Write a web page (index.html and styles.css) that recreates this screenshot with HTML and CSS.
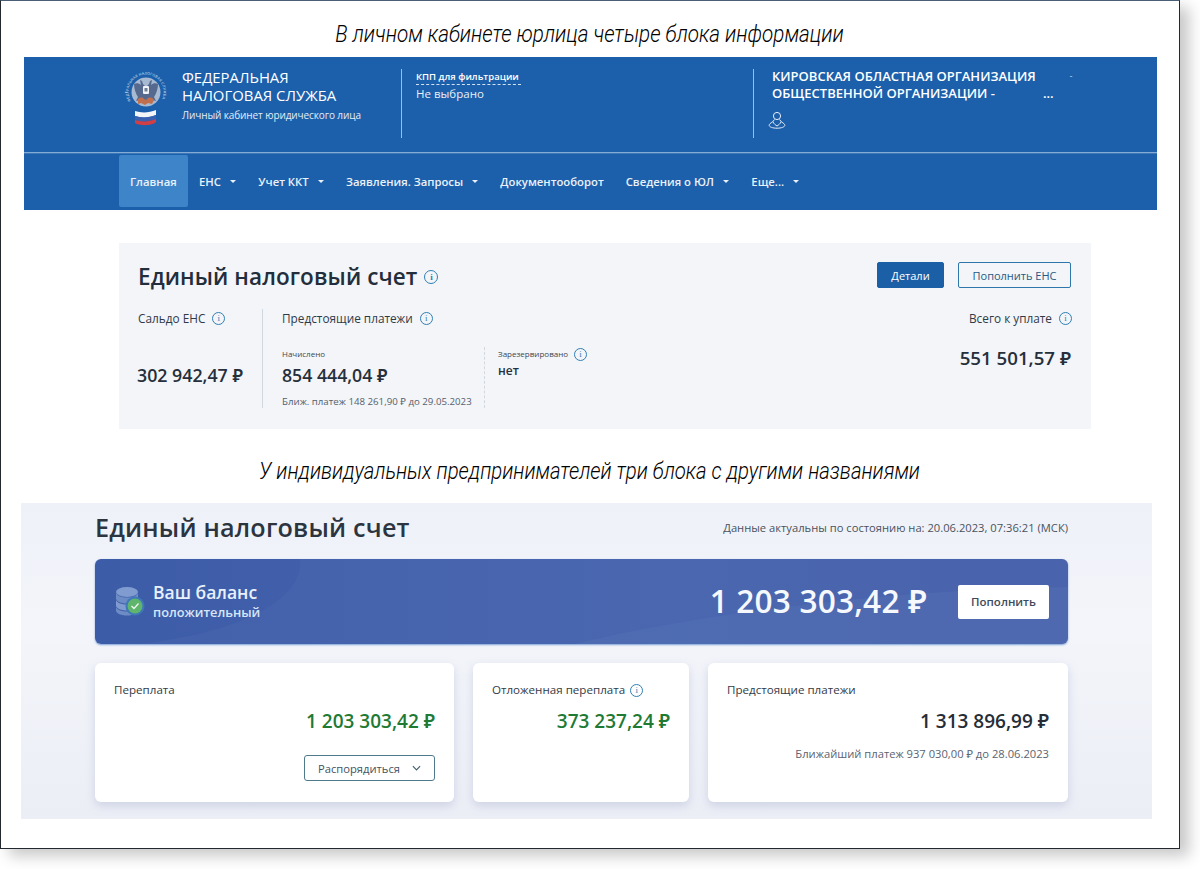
FILE: index.html
```html
<!DOCTYPE html>
<html lang="ru">
<head>
<meta charset="utf-8">
<title>Единый налоговый счет</title>
<link rel="stylesheet" href="styles.css">
</head>
<body>
<div class="frame">
  <h2 class="caption cap-one">В личном кабинете юрлица четыре блока информации</h2>
  <header class="lk">
    <div class="lk-top">
      <svg class="emblem" viewBox="0 0 48 56" width="48" height="56" aria-hidden="true">
        <defs><path id="ring" d="M8.800 29.800 A17.500 17.500 0 1 1 39.200 29.800"/></defs>
        <circle cx="24" cy="21" r="14.500" fill="#a8b9d2"/>
        <text class="ring-text"><textPath href="#ring" textLength="70">ФЕДЕРАЛЬНАЯ НАЛОГОВАЯ СЛУЖБА</textPath></text>
        <path d="M18 9l2 1 1 3 3 3 3-3 1-3 2-1-1 5c2-2 5-2 7-1 0 5-2 10-4 13l2 4-4-1-6 3-6-3-4 1 2-4c-2-3-4-8-4-13 2-1 5-1 7 1z" fill="#56698f"/>
        <path d="M16 28c2-2 5-2 6 0l2 1 2-2c3-1 5 0 6 2l-2 4-4-1-3 2-4-2-3 1z" fill="#c0704f"/>
        <rect x="21" y="15" width="6" height="8" rx="1" fill="#f1f4f8"/>
        <rect x="22.500" y="17" width="3" height="3.500" fill="#6f7f98"/>
        <path d="M13 40c6 2 14 2 21-1v5c-7 3-15 3-21 1z" fill="#f4f6f8"/>
        <path d="M13 45c6 2 14 2 21-1v4c-7 3-15 3-21 1z" fill="#3a62b0"/>
        <path d="M13 49c6 2 14 2 21-1v3c-4 4-17 4-21 1z" fill="#cf3f45"/>
      </svg>
      <div class="brand">
        <div class="brand-name">ФЕДЕРАЛЬНАЯ<br>НАЛОГОВАЯ СЛУЖБА</div>
        <div class="brand-sub">Личный кабинет юридического лица</div>
      </div>
      <div class="kpp">
        <div class="kpp-label">КПП для фильтрации</div>
        <div class="kpp-val">Не выбрано</div>
      </div>
      <div class="org">
        <div class="org-name"><span>КИРОВСКАЯ ОБЛАСТНАЯ ОРГАНИЗАЦИЯ</span><span class="org-tick">-</span></div>
        <div class="org-name"><span>ОБЩЕСТВЕННОЙ ОРГАНИЗАЦИИ -</span><span class="org-dots">...</span></div>
        <svg class="user" viewBox="0 0 18 18" width="18" height="18" fill="none" stroke="#e6eef7" stroke-width="1" aria-hidden="true">
          <circle cx="9" cy="5" r="3.600"/>
          <path d="M6.500 8.500 4.500 11c-2 1-3.300 2.200-3.300 3.300 0 1.700 3.500 2.900 7.800 2.900s7.800-1.200 7.800-2.900c0-1.100-1.300-2.300-3.300-3.300l-2-2.500"/>
          <path d="M5 11c1 2 2.500 3 4 4 1.500-1 3-2 4-4"/>
        </svg>
      </div>
    </div>
    <nav class="lk-nav">
      <a class="nav-item active">Главная</a>
      <a class="nav-item caret">ЕНС</a>
      <a class="nav-item caret">Учет ККТ</a>
      <a class="nav-item caret">Заявления. Запросы</a>
      <a class="nav-item">Документооборот</a>
      <a class="nav-item caret">Сведения о ЮЛ</a>
      <a class="nav-item caret">Еще...</a>
    </nav>
  </header>

  <section class="ens">
    <div class="ens-head">
      <h1 class="ens-title">Единый налоговый счет <i class="info info-title">i</i></h1>
      <div class="ens-actions">
        <button class="btn btn-fill">Детали</button>
        <button class="btn btn-line">Пополнить ЕНС</button>
      </div>
    </div>
    <div class="ens-body">
      <div class="col-saldo">
        <div class="lbl">Сальдо ЕНС <i class="info">i</i></div>
        <div class="amt saldo-amt">302 942,47 ₽</div>
      </div>
      <div class="col-pay">
        <div class="lbl">Предстоящие платежи <i class="info">i</i></div>
        <div class="pay-row">
          <div class="pay-main">
            <div class="tiny">Начислено</div>
            <div class="amt">854 444,04 ₽</div>
            <div class="near">Ближ. платеж 148 261,90 ₽ до 29.05.2023</div>
          </div>
          <div class="pay-res">
            <div class="tiny">Зарезервировано <i class="info">i</i></div>
            <div class="none">нет</div>
          </div>
        </div>
      </div>
      <div class="col-total">
        <div class="lbl">Всего к уплате <i class="info">i</i></div>
        <div class="amt total-amt">551 501,57 ₽</div>
      </div>
    </div>
  </section>

  <h2 class="caption cap-two">У индивидуальных предпринимателей три блока с другими названиями</h2>

  <section class="ip">
    <div class="ip-head">
      <h1 class="ip-title">Единый налоговый счет</h1>
      <div class="ip-date">Данные актуальны по состоянию на: 20.06.2023, 07:36:21 (МСК)</div>
    </div>
    <div class="banner">
      <svg class="swoosh" viewBox="0 0 973 85" preserveAspectRatio="none" aria-hidden="true">
        <path d="M205 0h770v85H40c90-8 170-40 165-85z" fill="#5573b6" opacity=".22"/>
        <path d="M480 85C600 55 800 30 973 28v57z" fill="#5b78ba" opacity=".3"/>
      </svg>
      <svg class="coins" viewBox="0 0 30 32" width="30" height="32" aria-hidden="true">
        <ellipse cx="12" cy="6" rx="11" ry="5" fill="#7f9bcf"/>
        <path d="M1 7c2 6 20 6 22 0v6c-2 6-20 6-22 0z" fill="#6d8cc6"/>
        <path d="M1 14c2 6 20 6 22 0v6c-2 6-20 6-22 0z" fill="#7f9bcf"/>
        <path d="M1 21c2 6 20 6 22 0v4c-2 6-20 6-22 0z" fill="#6d8cc6"/>
        <circle cx="20" cy="20" r="9.500" fill="#3f77b8"/>
        <circle cx="20" cy="20" r="7.500" fill="#5fb56c"/>
        <path d="M16.500 20l2.500 2.500 4.500-5" fill="none" stroke="#eef8ee" stroke-width="1.300"/>
      </svg>
      <div class="bal-text">
        <div class="bal-title">Ваш баланс</div>
        <div class="bal-sub">положительный</div>
      </div>
      <div class="bal-amt">1 203 303,42 ₽</div>
      <button class="bal-btn">Пополнить</button>
    </div>
    <div class="cards">
      <div class="card card-a">
        <div class="card-lbl">Переплата</div>
        <div class="card-amt green">1 203 303,42 ₽</div>
        <div class="card-foot">
          <button class="drop">Распорядиться
            <svg viewBox="0 0 10 6" width="9" height="6" fill="none" stroke="#44616f" stroke-width="1.300" aria-hidden="true"><path d="M1 1l4 4 4-4"/></svg>
          </button>
        </div>
      </div>
      <div class="card card-b">
        <div class="card-lbl">Отложенная переплата <i class="info">i</i></div>
        <div class="card-amt green">373 237,24 ₽</div>
      </div>
      <div class="card card-c">
        <div class="card-lbl">Предстоящие платежи</div>
        <div class="card-amt">1 313 896,99 ₽</div>
        <div class="card-near">Ближайший платеж 937 030,00 ₽ до 28.06.2023</div>
      </div>
    </div>
  </section>
</div>
</body>
</html>
```
FILE: styles.css
```css
* { box-sizing: border-box; }
html, body { margin: 0; padding: 0; background: #fff; }
body { font-family: "Open Sans", "Noto Sans", sans-serif; height: 869px; overflow: hidden; }
h1, h2 { margin: 0; font-weight: 400; }
i.info { font-style: normal; }
.frame {
  width: 1180px; height: 849px; background: #fff;
  border: 1px solid #23282e; border-top-color: #4a5f75;
  box-shadow: 9px 7px 14px rgba(0,0,0,.22);
  overflow: hidden;
}
.caption {
  font-family: "Roboto", sans-serif;
  font-style: italic; font-weight: 300; color: #000;
  font-size: 24px; line-height: 30px; text-align: center;
  white-space: nowrap;
}
.cap-one { margin: 18px 0 0 -1px; height: 38px; transform: scaleX(.86); }
.cap-two { margin: 28px 0 0 -1px; height: 46px; font-size: 23px; transform: scaleX(.885); }

/* ЛК header */
.lk { margin-left: 23px; width: 1133px; height: 153px; background: #1c5fab; color: #fff; }
.lk-top { height: 96px; padding: 12px 0 0 98px; display: flex; border-bottom: 1px solid #84abd3; box-shadow: 0 1px 0 #3c78b8; }
.emblem { margin-top: 2px; flex: none; }
.ring-text { font-size: 3.600px; fill: #dfe8f2; }
.brand { margin-left: 12px; width: 220px; height: 69px; border-right: 1px solid #9dbddc; }
.brand-name { font-size: 14.900px; line-height: 18px; margin-top: -1px; }
.brand-sub { font-size: 10px; letter-spacing: -.1px; line-height: 16px; margin-top: 3px; color: #e4edf6; white-space: nowrap; }
.kpp { width: 352px; height: 69px; padding: 0 0 0 14px; border-right: 1px solid #9dbddc; }
.kpp-label { font-size: 9.500px; font-weight: 600; line-height: 15px; width: 105px; border-bottom: 1px dashed #d5e2ef; }
.kpp-val { font-size: 11.500px; line-height: 17px; color: #e9f0f7; }
.org { padding: 0 0 0 18px; height: 69px; width: 330px; }
.org-name { font-size: 13px; font-weight: 600; line-height: 16.500px; display: flex; white-space: nowrap; position: relative; top: -1px; }
.org-tick { margin-left: 34px; font-size: 8px; opacity: .6; }
.org-dots { margin-left: 48px; }
.user { display: block; margin: 9px 0 0 -4px; }
.lk-nav { height: 57px; padding: 2px 0 0 95px; display: flex; align-items: stretch; }
.nav-item { font-size: 11.300px; font-weight: 600; color: #eaf1f8; display: flex; align-items: center; padding: 0 11px; white-space: nowrap; height: 52px; }
.nav-item.caret::after { content: ""; margin-left: 9.300px; border: 3px solid transparent; border-top: 3.500px solid #eaf1f8; border-bottom: 0; }
.nav-item.active { background: #3e84c9; border-radius: 2px; width: 69px; }

/* ENS card */
.ens { margin: 33px 0 0 118px; width: 972px; height: 186px; background: #f3f5f8; padding: 21px 19px 0; color: #27313e; }
.ens-head { display: flex; justify-content: space-between; align-items: flex-start; height: 45px; }
.ens-title { font-size: 22.500px; font-weight: 600; line-height: 30px; margin-top: -2px; letter-spacing: .1px; display: flex; align-items: center; gap: 7px; color: #232e3c; white-space: nowrap; }
.ens-actions { display: flex; gap: 14px; margin: -2px 1px 0 0; }
.btn { height: 26px; font-family: inherit; font-size: 11px; border-radius: 2px; padding: 0; }
.btn-fill { width: 67px; background: #1b5fa7; border: 1px solid #1b5fa7; color: #fff; }
.btn-line { width: 113px; background: transparent; border: 1px solid #2f77aa; color: #245a85; }
.info { display: inline-flex; width: 13px; height: 13px; border: 1.300px solid #2f7fb5; border-radius: 50%; color: #2f7fb5; font-size: 9px; line-height: 1; align-items: center; justify-content: center; flex: none; font-family: "Liberation Serif", serif; }
.info-title { width: 14px; height: 14px; }
.ens-body { display: flex; }
.lbl { font-size: 11.800px; font-weight: 500; line-height: 18px; height: 18px; display: flex; align-items: center; gap: 7px; color: #2f3a48; white-space: nowrap; }
.amt { font-size: 17.700px; font-weight: 600; line-height: 24px; white-space: nowrap; color: #262f3b; }
.col-saldo { width: 125px; height: 99px; border-right: 1px solid #cfd7e0; }
.saldo-amt { font-size: 17.800px; margin: 36px 0 0 -1px; }
.col-pay { width: 659px; padding-left: 19px; }
.pay-row { display: flex; margin-top: 20px; }
.pay-main { width: 203px; height: 61px; border-right: 1px dashed #d2d8df; }
.tiny { font-size: 8px; line-height: 14px; color: #3c4653; display: flex; align-items: center; gap: 6px; white-space: nowrap; }
.pay-main .amt { margin-top: 2px; }
.near { font-size: 9.700px; line-height: 12px; margin-top: 9px; color: #56606c; white-space: nowrap; }
.pay-res { padding-left: 13px; }
.none { font-size: 12px; font-weight: 600; line-height: 16px; margin-top: 2px; }
.col-total { flex: 1; text-align: right; }
.col-total .lbl { justify-content: flex-end; }
.col-total .amt { margin-right: 1px; }
.total-amt { font-size: 18.700px; margin-top: 19px; }

/* IP */
.ip { margin: 0 0 0 20px; width: 1131px; height: 316px; padding: 0 84px 0 74px;
  background: linear-gradient(180deg, #eef1f8 0, #f3f5fa 40%, #eceef6 100%); }
.ip-head { display: flex; justify-content: space-between; align-items: center; height: 56px; padding-bottom: 8px; }
.ip-title { font-size: 25.200px; font-weight: 600; color: #2c3440; letter-spacing: .2px; white-space: nowrap; }
.ip-date { font-size: 11.200px; color: #4a525e; white-space: nowrap; }
.banner { position: relative; height: 85px; background: linear-gradient(90deg, #3d5ca8, #4764ae 60%, #465fa9); border-radius: 6px; box-shadow: 0 1px 2px rgba(45,105,190,.6); display: flex; align-items: center; padding: 0 19px 0 20px; color: #fff; overflow: hidden; }
.swoosh { position: absolute; inset: 0; width: 100%; height: 100%; }
.coins, .bal-text, .bal-amt, .bal-btn { position: relative; }
.bal-text { margin-left: 8px; margin-top: -2px; }
.bal-title { font-size: 17.500px; font-weight: 600; line-height: 24px; color: #e8f1fb; }
.bal-sub { font-size: 12.800px; font-weight: 600; line-height: 17.500px; color: #d6e6f7; }
.bal-amt { margin-left: auto; margin-top: -2px; font-size: 31.600px; font-weight: 600; letter-spacing: .2px; color: #f5f8fc; white-space: nowrap; }
.bal-btn { margin-left: 31px; width: 91px; height: 34px; background: #fff; border: 0; border-radius: 2px; font-family: inherit; font-size: 11.500px; font-weight: 600; color: #3d4b5b; }
.cards { display: flex; gap: 19px; margin-top: 19px; }
.card { height: 139px; background: #fff; border-radius: 6px; box-shadow: 0 4px 10px rgba(150,160,195,.35); padding: 19px 19px 0; color: #333b46; }
.card-a { width: 359px; }
.card-b { width: 216px; }
.card-c { width: 360px; }
.card-lbl { font-size: 11.600px; font-weight: 500; line-height: 16px; display: flex; align-items: center; gap: 5px; white-space: nowrap; }
.card-amt { font-size: 19px; font-weight: 600; line-height: 26px; text-align: right; margin-top: 10px; white-space: nowrap; color: #262d37; }
.card-amt.green { color: #1f7a34; }
.card-foot { display: flex; justify-content: flex-end; margin-top: 21px; }
.drop { width: 131px; height: 26px; background: #fff; border: 1px solid #4f7a8c; border-radius: 3px; font-family: inherit; font-size: 11.200px; color: #44525f; display: flex; align-items: center; justify-content: center; gap: 12px; }
.card-near { font-size: 11.200px; line-height: 15px; text-align: right; margin-top: 12px; color: #5a6370; white-space: nowrap; }
```
